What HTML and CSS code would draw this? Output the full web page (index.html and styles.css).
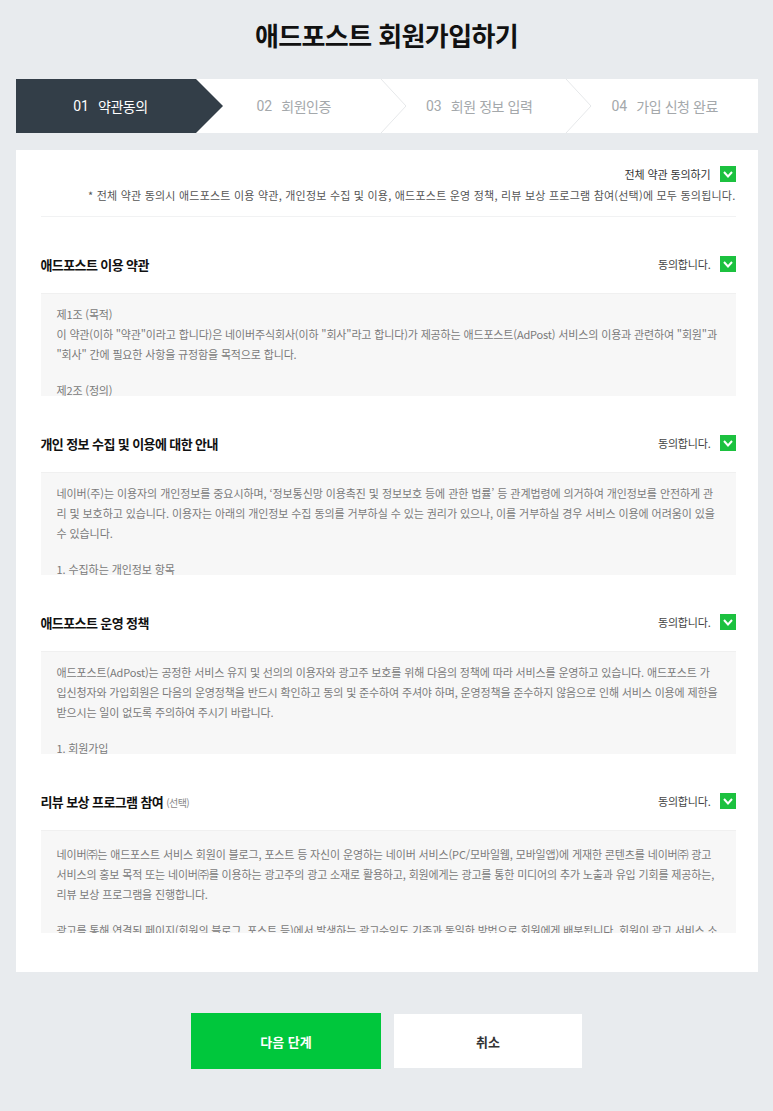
FILE: index.html
```html
<!DOCTYPE html>
<html lang="ko">
<head>
<meta charset="utf-8">
<title>애드포스트 회원가입하기</title>
<link rel="stylesheet" href="styles.css">
</head>
<body>
<div class="page">
  <h1 class="title">애드포스트 회원가입하기</h1>

  <ol class="steps">
    <li class="step step-on"><span class="num">01</span>약관동의</li>
    <li class="step"><span class="num">02</span>회원인증
      <svg class="chev" width="27" height="54" viewBox="0 0 27 54"><polyline points="1,0 26,27 1,54" fill="none" stroke="#e6e8ea" stroke-width="1"/></svg>
    </li>
    <li class="step"><span class="num">03</span>회원 정보 입력
      <svg class="chev" width="27" height="54" viewBox="0 0 27 54"><polyline points="1,0 26,27 1,54" fill="none" stroke="#e6e8ea" stroke-width="1"/></svg>
    </li>
    <li class="step"><span class="num">04</span>가입 신청 완료</li>
  </ol>

  <div class="card">
    <div class="all-row">
      <span class="all-label">전체 약관 동의하기</span>
      <span class="check"><svg width="16" height="16" viewBox="0 0 16 16"><polyline points="4,6 8,10.5 12,6" fill="none" stroke="#fff" stroke-width="2"/></svg></span>
    </div>
    <p class="note">* 전체 약관 동의시 애드포스트 이용 약관, 개인정보 수집 및 이용, 애드포스트 운영 정책, 리뷰 보상 프로그램 참여(선택)에 모두 동의됩니다.</p>

    <section class="sec">
      <div class="sec-head">
        <h2 class="sec-title">애드포스트 이용 약관</h2>
        <span class="agree">동의합니다.</span>
        <span class="check"><svg width="16" height="16" viewBox="0 0 16 16"><polyline points="4,6 8,10.5 12,6" fill="none" stroke="#fff" stroke-width="2"/></svg></span>
      </div>
      <div class="terms">
        <p>제1조 (목적)<br>이 약관(이하 "약관"이라고 합니다)은 네이버주식회사(이하 "회사"라고 합니다)가 제공하는 애드포스트(AdPost) 서비스의 이용과 관련하여 "회원"과 "회사" 간에 필요한 사항을 규정함을 목적으로 합니다.</p>
        <p>제2조 (정의)<br>이 약관에서 사용하는 용어의 정의는 다음과 같습니다.</p>
      </div>
    </section>

    <section class="sec">
      <div class="sec-head">
        <h2 class="sec-title">개인 정보 수집 및 이용에 대한 안내</h2>
        <span class="agree">동의합니다.</span>
        <span class="check"><svg width="16" height="16" viewBox="0 0 16 16"><polyline points="4,6 8,10.5 12,6" fill="none" stroke="#fff" stroke-width="2"/></svg></span>
      </div>
      <div class="terms terms-wide">
        <p>네이버(주)는 이용자의 개인정보를 중요시하며, ‘정보통신망 이용촉진 및 정보보호 등에 관한 법률’ 등 관계법령에 의거하여 개인정보를 안전하게 관리 및 보호하고 있습니다. 이용자는 아래의 개인정보 수집 동의를 거부하실 수 있는 권리가 있으나, 이를 거부하실 경우 서비스 이용에 어려움이 있을 수 있습니다.</p>
        <p>1. 수집하는 개인정보 항목</p>
      </div>
    </section>

    <section class="sec">
      <div class="sec-head">
        <h2 class="sec-title">애드포스트 운영 정책</h2>
        <span class="agree">동의합니다.</span>
        <span class="check"><svg width="16" height="16" viewBox="0 0 16 16"><polyline points="4,6 8,10.5 12,6" fill="none" stroke="#fff" stroke-width="2"/></svg></span>
      </div>
      <div class="terms">
        <p>애드포스트(AdPost)는 공정한 서비스 유지 및 선의의 이용자와 광고주 보호를 위해 다음의 정책에 따라 서비스를 운영하고 있습니다. 애드포스트 가입신청자와 가입회원은 다음의 운영정책을 반드시 확인하고 동의 및 준수하여 주셔야 하며, 운영정책을 준수하지 않음으로 인해 서비스 이용에 제한을 받으시는 일이 없도록 주의하여 주시기 바랍니다.</p>
        <p>1. 회원가입</p>
      </div>
    </section>

    <section class="sec">
      <div class="sec-head">
        <h2 class="sec-title">리뷰 보상 프로그램 참여 <small class="opt">(선택)</small></h2>
        <span class="agree">동의합니다.</span>
        <span class="check"><svg width="16" height="16" viewBox="0 0 16 16"><polyline points="4,6 8,10.5 12,6" fill="none" stroke="#fff" stroke-width="2"/></svg></span>
      </div>
      <div class="terms terms-last">
        <p>네이버㈜는 애드포스트 서비스 회원이 블로그, 포스트 등 자신이 운영하는 네이버 서비스(PC/모바일웹, 모바일앱)에 게재한 콘텐츠를 네이버㈜ 광고 서비스의 홍보 목적 또는 네이버㈜를 이용하는 광고주의 광고 소재로 활용하고, 회원에게는 광고를 통한 미디어의 추가 노출과 유입 기회를 제공하는, 리뷰 보상 프로그램을 진행합니다.</p>
        <p>광고를 통해 연결된 페이지(회원의 블로그, 포스트 등)에서 발생하는 광고수익도 기존과 동일한 방법으로 회원에게 배분됩니다. 회원이 광고 서비스 소재 활용에 동의하지 않는 경우 언제든지 철회할 수 있습니다.</p>
      </div>
    </section>
  </div>

  <div class="buttons">
    <button class="btn btn-next" type="button">다음 단계</button>
    <button class="btn btn-cancel" type="button">취소</button>
  </div>
</div>
</body>
</html>
```

FILE: styles.css
```css
* { box-sizing: border-box; }
html, body { margin: 0; padding: 0; }
body {
  background: #e8ebee;
  font-family: "Noto Sans CJK KR", "Noto Sans", sans-serif;
  color: #222;
}
.page {
  width: 742px;
  margin: 0 auto;
  padding-bottom: 40px;
}
.title {
  margin: 0;
  padding-top: 16px;
  height: 79px;
  text-align: center;
  font-size: 26px;
  font-weight: 700;
  letter-spacing: -0.6px;
  line-height: 38px;
  color: #111;
}
.steps {
  list-style: none;
  margin: 0;
  padding: 0;
  display: grid;
  grid-template-columns: repeat(4, 1fr);
  height: 54px;
  background: #fff;
}
.step {
  position: relative;
  display: flex;
  align-items: center;
  justify-content: center;
  font-size: 14px;
  color: #a4a8ab;
  letter-spacing: -0.4px;
}
.step .num {
  font-family: Roboto, "Noto Sans", sans-serif;
  margin-right: 9px;
  letter-spacing: 0;
}
.step-on {
  background: #333e48;
  color: #fff;
  width: 180px;
  padding-left: 10px;
  z-index: 2;
}
.step-on::after {
  content: "";
  position: absolute;
  left: 100%;
  top: 0;
  border-left: 27px solid #333e48;
  border-top: 27px solid transparent;
  border-bottom: 27px solid transparent;
}
.chev {
  position: absolute;
  right: -20px;
  top: 0;
  z-index: 1;
}
.card {
  margin-top: 17px;
  background: #fff;
  padding: 16px 22px 39px 25px;
}
.all-row {
  display: flex;
  justify-content: flex-end;
  align-items: center;
  height: 16px;
}
.all-label {
  font-size: 11px;
  color: #333;
  letter-spacing: -0.1px;
  margin-right: 9px;
}
.check {
  display: inline-flex;
  width: 16px;
  height: 16px;
  background: #1cc13f;
}
.note {
  margin: 5px 0 0;
  padding-bottom: 13px;
  border-bottom: 1px solid #f1f2f3;
  text-align: right;
  font-size: 11px;
  line-height: 16px;
  color: #555;
  letter-spacing: 0.22px;
}
.sec { padding-top: 39px; }
.sec-head {
  display: flex;
  align-items: center;
  height: 16px;
}
.sec-title {
  margin: 0;
  flex: 1;
  font-size: 13px;
  font-weight: 700;
  color: #111;
  letter-spacing: -0.6px;
}
.opt {
  font-size: 10px;
  font-weight: 400;
  color: #888;
}
.agree {
  font-size: 11px;
  color: #444;
  letter-spacing: -0.2px;
  margin-right: 9px;
}
.terms {
  margin-top: 21px;
  height: 103px;
  overflow: hidden;
  background: #f7f7f7;
  border-top: 1px solid #f0f0f0;
  padding: 10px 16px 0;
  font-size: 11px;
  line-height: 20px;
  color: #7a7a7a;
  letter-spacing: -0.15px;
}
.terms-wide { letter-spacing: -0.08px; }
.terms-last { padding-top: 13px; }
.terms p { margin: 0 0 16px; }
.buttons {
  display: flex;
  justify-content: center;
  gap: 13px;
  margin-top: 41px;
}
.btn {
  border: 0;
  font-family: inherit;
  font-size: 13px;
  font-weight: 700;
  height: 56px;
  cursor: pointer;
}
.btn-next {
  width: 190px;
  background: #00c73c;
  color: #fff;
}
.btn-cancel {
  width: 188px;
  background: #fff;
  color: #333;
  height: 54px;
  margin-top: 1px;
}
```
